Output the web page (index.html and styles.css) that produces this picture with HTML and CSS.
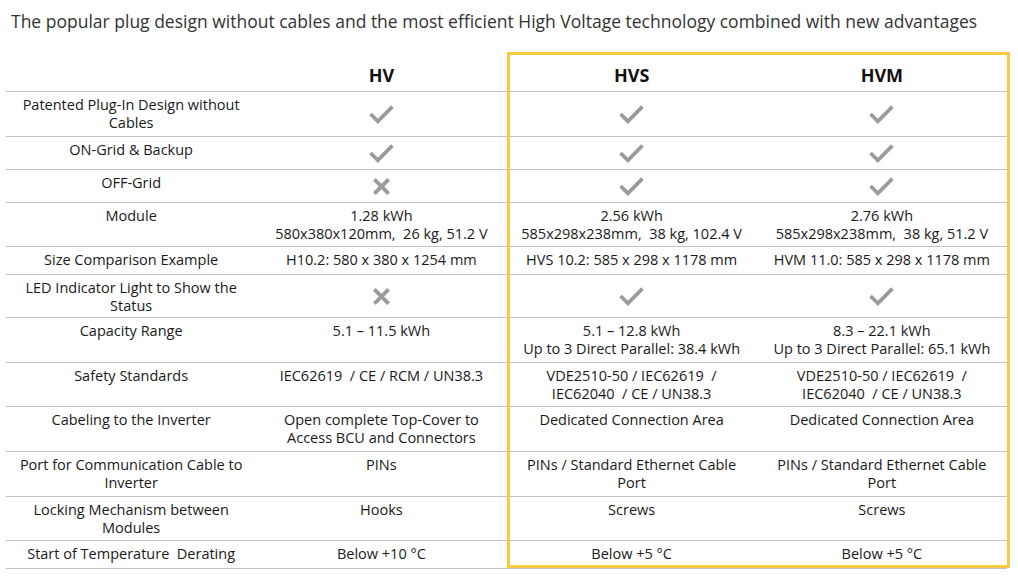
FILE: index.html
```html
<!DOCTYPE html>
<html lang="en">
<head>
<meta charset="utf-8">
<title>HV / HVS / HVM comparison</title>
<link rel="stylesheet" href="styles.css">
</head>
<body>
<h1 class="title">The popular plug design without cables and the most efficient High Voltage technology combined with new advantages</h1>
<div class="wrap">
  <div class="cmp">
    <div class="row head">
      <div class="cell"></div>
      <div class="cell">HV</div>
      <div class="cell">HVS</div>
      <div class="cell">HVM</div>
    </div>
    <div class="row h45">
      <div class="cell">Patented Plug-In Design without<br>Cables</div>
      <div class="cell icon"><svg class="check" viewBox="0 0 24 18"><polyline points="1.5,8.5 8.5,15.5 22.5,1.5"/></svg></div>
      <div class="cell icon"><svg class="check" viewBox="0 0 24 18"><polyline points="1.5,8.5 8.5,15.5 22.5,1.5"/></svg></div>
      <div class="cell icon"><svg class="check" viewBox="0 0 24 18"><polyline points="1.5,8.5 8.5,15.5 22.5,1.5"/></svg></div>
    </div>
    <div class="row h33">
      <div class="cell">ON-Grid &amp; Backup</div>
      <div class="cell icon"><svg class="check" viewBox="0 0 24 18"><polyline points="1.5,8.5 8.5,15.5 22.5,1.5"/></svg></div>
      <div class="cell icon"><svg class="check" viewBox="0 0 24 18"><polyline points="1.5,8.5 8.5,15.5 22.5,1.5"/></svg></div>
      <div class="cell icon"><svg class="check" viewBox="0 0 24 18"><polyline points="1.5,8.5 8.5,15.5 22.5,1.5"/></svg></div>
    </div>
    <div class="row h33">
      <div class="cell">OFF-Grid</div>
      <div class="cell icon"><svg class="cross" viewBox="0 0 16 16"><path d="M2 2 L14 14 M14 2 L2 14"/></svg></div>
      <div class="cell icon"><svg class="check" viewBox="0 0 24 18"><polyline points="1.5,8.5 8.5,15.5 22.5,1.5"/></svg></div>
      <div class="cell icon"><svg class="check" viewBox="0 0 24 18"><polyline points="1.5,8.5 8.5,15.5 22.5,1.5"/></svg></div>
    </div>
    <div class="row h44">
      <div class="cell">Module</div>
      <div class="cell">1.28 kWh<br>580x380x120mm,&nbsp; 26 kg, 51.2 V</div>
      <div class="cell">2.56 kWh<br>585x298x238mm,&nbsp; 38 kg, 102.4 V</div>
      <div class="cell">2.76 kWh<br>585x298x238mm,&nbsp; 38 kg, 51.2 V</div>
    </div>
    <div class="row h28">
      <div class="cell">Size Comparison Example</div>
      <div class="cell">H10.2: 580 x 380 x 1254 mm</div>
      <div class="cell">HVS 10.2: 585 x 298 x 1178 mm</div>
      <div class="cell">HVM 11.0: 585 x 298 x 1178 mm</div>
    </div>
    <div class="row h43">
      <div class="cell">LED Indicator Light to Show the<br>Status</div>
      <div class="cell icon"><svg class="cross" viewBox="0 0 16 16"><path d="M2 2 L14 14 M14 2 L2 14"/></svg></div>
      <div class="cell icon"><svg class="check" viewBox="0 0 24 18"><polyline points="1.5,8.5 8.5,15.5 22.5,1.5"/></svg></div>
      <div class="cell icon"><svg class="check" viewBox="0 0 24 18"><polyline points="1.5,8.5 8.5,15.5 22.5,1.5"/></svg></div>
    </div>
    <div class="row h45">
      <div class="cell">Capacity Range</div>
      <div class="cell">5.1 – 11.5 kWh</div>
      <div class="cell">5.1 – 12.8 kWh<br>Up to 3 Direct Parallel: 38.4 kWh</div>
      <div class="cell">8.3 – 22.1 kWh<br>Up to 3 Direct Parallel: 65.1 kWh</div>
    </div>
    <div class="row h44">
      <div class="cell">Safety Standards</div>
      <div class="cell">IEC62619&nbsp; / CE / RCM / UN38.3</div>
      <div class="cell">VDE2510-50 / IEC62619&nbsp; /<br>IEC62040&nbsp; / CE / UN38.3</div>
      <div class="cell">VDE2510-50 / IEC62619&nbsp; /<br>IEC62040&nbsp; / CE / UN38.3</div>
    </div>
    <div class="row h45">
      <div class="cell">Cabeling to the Inverter</div>
      <div class="cell">Open complete Top-Cover to<br>Access BCU and Connectors</div>
      <div class="cell">Dedicated Connection Area</div>
      <div class="cell">Dedicated Connection Area</div>
    </div>
    <div class="row h45">
      <div class="cell">Port for Communication Cable to<br>Inverter</div>
      <div class="cell">PINs</div>
      <div class="cell">PINs / Standard Ethernet Cable<br>Port</div>
      <div class="cell">PINs / Standard Ethernet Cable<br>Port</div>
    </div>
    <div class="row h44">
      <div class="cell">Locking Mechanism between<br>Modules</div>
      <div class="cell">Hooks</div>
      <div class="cell">Screws</div>
      <div class="cell">Screws</div>
    </div>
    <div class="row h28">
      <div class="cell">Start of Temperature&nbsp; Derating</div>
      <div class="cell">Below +10 °C</div>
      <div class="cell">Below +5 °C</div>
      <div class="cell">Below +5 °C</div>
    </div>
  </div>
  <div class="highlight"></div>
</div>
</body>
</html>
```
FILE: styles.css
```css
html, body {
  margin: 0;
  padding: 0;
  background: #ffffff;
}

body {
  font-family: "Open Sans", "Noto Sans", "DejaVu Sans", sans-serif;
  color: #1a1a1a;
}

.title {
  margin: 0;
  padding: 10px 0 0 11px;
  font-size: 17.5px;
  line-height: 23px;
  font-weight: 400;
  color: #333333;
  white-space: nowrap;
}

.wrap {
  position: relative;
  margin: 20px 0 0 6px;
  width: 1001px;
}

.cmp {
  display: flex;
  flex-direction: column;
}

.row {
  display: grid;
  grid-template-columns: repeat(4, 1fr);
  border-bottom: 1px solid #c3c3c3;
  box-sizing: border-box;
}

.cell {
  text-align: center;
  font-size: 14.5px;
  line-height: 18px;
  padding: 4px 2px 0;
  white-space: nowrap;
}

.head {
  height: 39px;
}

.head .cell {
  font-weight: 700;
  font-size: 18px;
  line-height: 24px;
  padding: 10px 0 0;
  color: #111111;
}

.h28 { height: 28px; }
.h33 { height: 33px; }
.h43 { height: 43px; }
.h44 { height: 44px; }
.h45 { height: 45px; }

.icon {
  display: flex;
  align-items: center;
  justify-content: center;
  padding: 0;
}

.check {
  width: 25px;
  height: 19px;
  fill: none;
  stroke: #9b9b9b;
  stroke-width: 3.6;
  stroke-linecap: butt;
  stroke-linejoin: miter;
}

.cross {
  width: 19px;
  height: 19px;
  fill: none;
  stroke: #9b9b9b;
  stroke-width: 3.2;
}

.highlight {
  position: absolute;
  left: 501px;
  top: -1px;
  width: 503px;
  height: 516px;
  box-sizing: border-box;
  border: 3px solid #f7c945;
  pointer-events: none;
}
```
